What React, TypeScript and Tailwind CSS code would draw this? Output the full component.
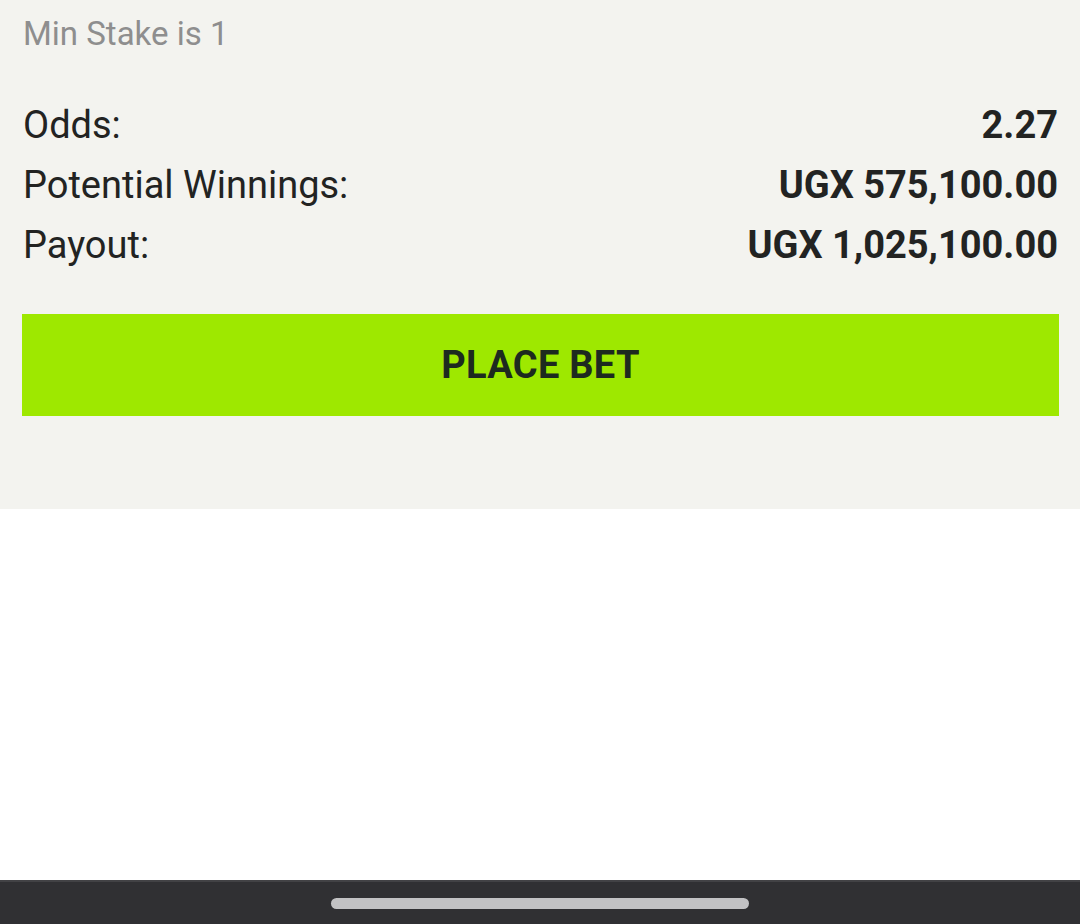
export default function App() {
  const rows = [
    { label: "Odds:", value: "2.27" },
    { label: "Potential Winnings:", value: "UGX 575,100.00" },
    { label: "Payout:", value: "UGX 1,025,100.00" },
  ];
  return (
    <div className="flex h-[924px] flex-col bg-white" style={{ fontFamily: "Roboto, 'Noto Sans', sans-serif" }}>
      <div className="bg-[#f3f3ef] pl-[22px] pr-[21px] pt-[14px] pb-[93px]">
        <div className="px-[1px] text-[33px] leading-[40px] text-[#8e8e8e]">Min Stake is 1</div>
        <div className="mt-[41px] flex flex-col px-[1px]">
          {rows.map((r) => (
            <div key={r.label} className="flex h-[60px] items-center justify-between text-[38px] leading-[60px] text-[#222322]">
              <span>{r.label}</span>
              <span className="font-bold">{r.value}</span>
            </div>
          ))}
        </div>
        <button className="mt-[39px] flex h-[102px] w-full items-center justify-center bg-[#9ee800] text-[38px] font-bold tracking-[0.3px] text-[#1d2a1f]">
          PLACE BET
        </button>
      </div>
      <div className="flex-1 bg-white" />
      <div className="flex h-[44px] items-center justify-center border-t-2 border-[#424245] bg-[#303033]">
        <div className="h-[11px] w-[418px] rounded-full bg-[#c2c2c4]" />
      </div>
    </div>
  );
}
